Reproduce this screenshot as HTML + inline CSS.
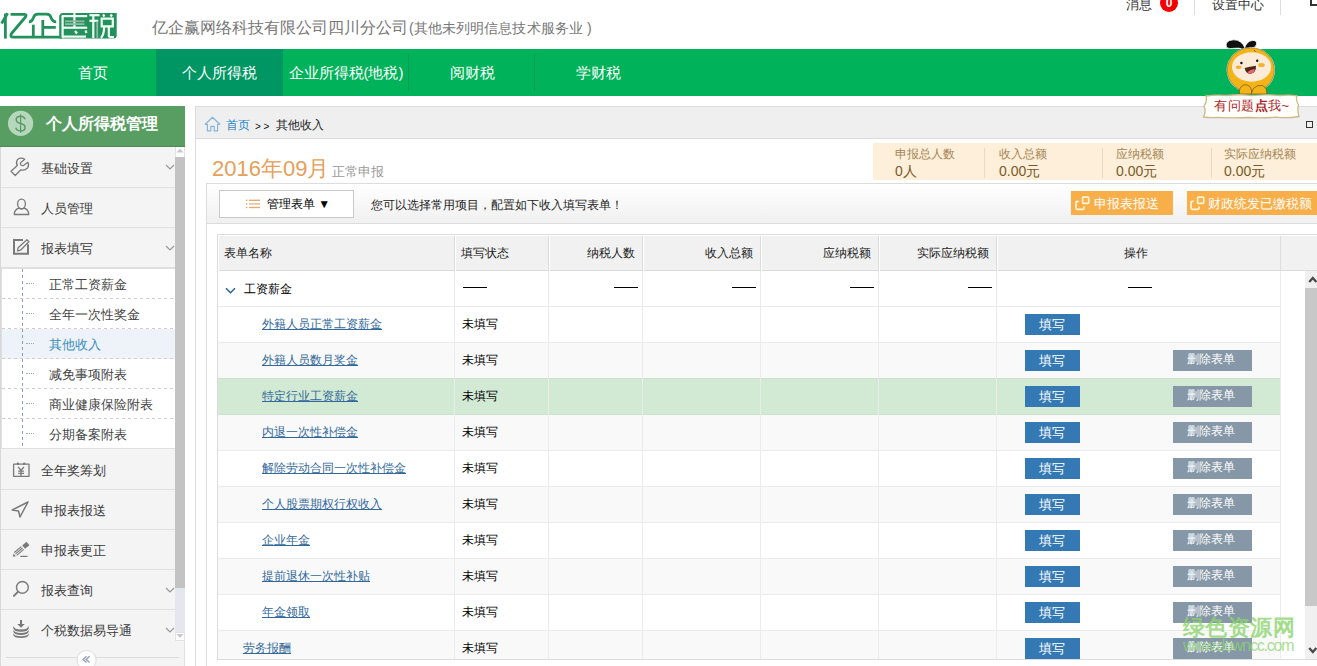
<!DOCTYPE html>
<html><head><meta charset="utf-8">
<style>
*{box-sizing:border-box;margin:0;padding:0}
html,body{width:1317px;height:666px;overflow:hidden;background:#fff;font-family:"Liberation Sans",sans-serif;color:#333;position:relative}
.a{position:absolute;white-space:nowrap}
/* header */
#comp{left:152px;top:17px;font-size:16px;line-height:22px;color:#777}
#comp span{font-size:14px;padding-left:1px;letter-spacing:0.1px}
/* nav */
#nav{left:0;top:49px;width:1317px;height:47px;background:#00b259}
#nav .it{position:absolute;top:0;height:47px;line-height:47px;color:#fff;font-size:15px;text-align:center;width:126px}
#nav .act{background:#009664}
#nav .sep{position:absolute;top:5px;width:1px;height:37px;background:#0b9a54}
/* sidebar */
#sb{left:0;top:106px;width:185px;height:560px;background:#f4f4f4;border-left:1px solid #d8d8d8;border-right:1px solid #e0e0e0}
#sbh{left:0;top:106px;width:185px;height:41px;background:#589e62;border-bottom:1px solid #4d8a57;color:#fff;font-size:16px;font-weight:bold;line-height:36px}
.mi{position:absolute;left:1px;width:174px;height:40px;border-bottom:1px solid #e0e0e0;font-size:13px;color:#3a3a3a;line-height:40px}
.mi .tx{position:absolute;left:40px;top:0}
.mi .chev{position:absolute;left:164px;top:17px}
.mi svg.ic{position:absolute}
.si{position:absolute;left:2px;width:173px;height:30px;background:#fff;font-size:13px;color:#444;line-height:30px}
.si::after{content:"";position:absolute;left:0;bottom:0;width:173px;height:1px;background:repeating-linear-gradient(to right,#cfcfcf 0 3px,transparent 3px 6px)}
.si.last::after{display:none}
.si .tx{position:absolute;left:47px;top:0}
.si .dt{position:absolute;left:24px;top:14px;width:8px;border-top:1px dotted #9aa8b8}
/* content */
#cp{left:195px;top:106px;width:1122px;height:560px;border-left:1px solid #dcdcdc;border-top:1px solid #dcdcdc}
#bc{left:196px;top:107px;width:1121px;height:32px;background:#efefef;border-bottom:1px solid #dcdcdc}
.tb{position:absolute}
table{border-collapse:collapse}
.th{top:245px;font-size:12px;line-height:17px;color:#222}
.td{font-size:12px;line-height:17px}
.lk{color:#33699a;text-decoration:underline}
.btn{height:21px;color:#fff;font-size:12px;line-height:21px;text-align:center}

.sl{top:146px;font-size:12px;line-height:16px;color:#a58556}
.sv{top:162px;font-size:14px;line-height:18px;color:#7b5a2a}
.ob{top:191px;height:24px;background:#f8af4a;color:#fff;font-size:13px;line-height:24px}

</style></head><body>

<!-- logo -->
<svg class="a" style="left:0;top:0" width="120" height="45" viewBox="0 0 120 45">
  <g fill="none" stroke="#23915b" stroke-width="2.8" stroke-linejoin="round">
    <path d="M7.6 13.3 L1.6 23.5"/>
    <path d="M5.4 13.5 V38.6"/>
    <path d="M10.6 14.4 H24.5 Q27 14.4 25.5 17 L11.5 33.5 Q9.5 37.2 13.5 37.2 H62"/>
    <path d="M28.9 21.9 Q32 21.9 33.5 17.5 Q34.5 14.1 38 14.1 H46.5 Q50 14.1 51 17.5 Q52.5 21.9 56.2 21.9"/>
    <path d="M33.3 24.7 V37"/>
    <path d="M42.8 20 V37"/>
    <path d="M42.8 27.4 H55.8"/>
  </g>
  <path d="M59.2 38.6 V17 Q59.2 13 63.2 13 H116.7 V35.6 Q116.7 38.6 113.7 38.6 Z" fill="#23915b"/>
  <g fill="none" stroke="#f2fff6" stroke-width="2.2">
    <path d="M61.7 16.1 H87.2"/>
    <path d="M62.6 16 V37.6"/>
    <path d="M62 27.7 H87.2"/>
    <path d="M74.4 13 V27.7"/>
    
    <path d="M62 36.6 H86"/>
    <path d="M75 31 L77 33.5"/>
    <path d="M85.5 30.5 L86.5 33"/>
    <path d="M89.4 15.2 H99.6"/>
    <path d="M89.4 20.8 H98.2"/>
    <path d="M93.3 15 V38.2"/>
    <path d="M103 14.5 L104.5 16.5"/>
    <path d="M112 14.5 L110.5 16.5"/>
    <path d="M101.7 18.6 H112.8 V26.3 H101.7 Z"/>
    <path d="M104.2 26.3 Q104.2 34.5 101 38"/>
    <path d="M108.8 26.3 V35.5 Q108.8 37.2 111 37.2 H114"/>
  </g>
  <g fill="none" stroke="#8fb9a2" stroke-width="1.8">
    <path d="M65 21.3 H84.5"/>
    <path d="M65 24.1 H84.5"/>
    <path d="M97.2 21.5 V38.2"/>
  </g>
</svg>
<div id="comp" class="a">亿企赢网络科技有限公司四川分公司<span>(其他未列明信息技术服务业 )</span></div>

<!-- top right -->
<div class="a" style="left:1126px;top:-4px;font-size:13px;line-height:18px;color:#333">消息</div>
<div class="a" style="left:1160px;top:-6px;width:18px;height:18px;border-radius:50%;background:#f50000;color:#fff;font-size:12px;font-weight:bold;line-height:18px;text-align:center">0</div>
<div class="a" style="left:1194px;top:0;width:1px;height:15px;background:#ddd"></div>
<div class="a" style="left:1212px;top:-4px;font-size:13px;line-height:18px;color:#333">设置中心</div>
<div class="a" style="left:1280px;top:0;width:1px;height:15px;background:#ddd"></div>
<div class="a" style="left:1310px;top:-4px;width:10px;height:10px;border:2px solid #333"></div>

<!-- nav -->
<div id="nav" class="a">
  <div class="it" style="left:30px">首页</div>
  <div class="it act" style="left:156px;width:127px">个人所得税</div>
  <div class="it" style="left:283px">企业所得税(地税)</div>
  <div class="sep" style="left:408px"></div>
  <div class="it" style="left:409px">阅财税</div>
  <div class="sep" style="left:534px"></div>
  <div class="it" style="left:535px">学财税</div>
</div>



<!-- sidebar -->
<div id="sb" class="a"></div>
<div id="sbh" class="a">
  <svg class="a" style="left:0;top:0" width="40" height="41" viewBox="0 106 40 41"><circle cx="20.6" cy="123.4" r="12.6" fill="#b6d7bb"/><path d="M25 119.4 Q24.2 116.3 20.5 116.3 Q16.2 116.3 16.2 119.8 Q16.2 122.6 20.6 123.4 Q25.1 124.3 25.1 127.4 Q25.1 130.9 20.5 130.9 Q16.5 130.9 15.8 127.7" fill="none" stroke="#5a9a64" stroke-width="1.5"/><path d="M20.6 114.2 V132.8" stroke="#5a9a64" stroke-width="1.2"/></svg>
  <div class="a" style="left:46px;top:0;line-height:36px">个人所得税管理</div>
</div>

<div class="mi" style="top:147px;height:41px"><span class="tx" style="top:2px">基础设置</span><svg class="chev" width="10" height="7" viewBox="0 0 10 7"><path d="M1 1 L5 5 L9 1" fill="none" stroke="#999" stroke-width="1.2"/></svg></div>
<div class="mi" style="top:188px;height:40px"><span class="tx" style="top:1px">人员管理</span></div>
<div class="mi" style="top:228px;height:40px"><span class="tx" style="top:1px">报表填写</span><svg class="chev" width="10" height="7" viewBox="0 0 10 7"><path d="M1 1 L5 5 L9 1" fill="none" stroke="#999" stroke-width="1.2"/></svg></div>
<div class="si" style="top:269px"><span class="dt"></span><span class="tx" style="top:1px">正常工资薪金</span></div>
<div class="si" style="top:299px"><span class="dt"></span><span class="tx" style="top:1px">全年一次性奖金</span></div>
<div class="si" style="top:329px;background:#edf3f8;color:#3d8cc0"><span class="dt"></span><span class="tx" style="top:1px">其他收入</span></div>
<div class="si" style="top:359px"><span class="dt"></span><span class="tx" style="top:1px">减免事项附表</span></div>
<div class="si" style="top:389px"><span class="dt"></span><span class="tx" style="top:1px">商业健康保险附表</span></div>
<div class="si last" style="border-bottom:1px solid #e0e0e0;top:419px"><span class="dt"></span><span class="tx" style="top:1px">分期备案附表</span></div>
<div class="a" style="left:1px;top:268px;width:174px;height:1px;background:#e0e0e0"></div><div class="a" style="left:1px;top:268px;width:1px;height:181px;background:#dedede"></div>
<div class="a" style="left:22px;top:269px;width:1px;height:177px;background:repeating-linear-gradient(to bottom,#8b9db2 0 3px,transparent 3px 6px)"></div>

<div class="mi" style="top:449px;height:41px"><span class="tx" style="top:2px">全年奖筹划</span></div>
<div class="mi" style="top:490px;height:40px"><span class="tx" style="top:1px">申报表报送</span></div>
<div class="mi" style="top:530px;height:40px"><span class="tx" style="top:1px">申报表更正</span></div>
<div class="mi" style="top:570px;height:40px"><span class="tx" style="top:1px">报表查询</span><svg class="chev" width="10" height="7" viewBox="0 0 10 7"><path d="M1 1 L5 5 L9 1" fill="none" stroke="#999" stroke-width="1.2"/></svg></div>
<div class="mi" style="top:610px;height:56px;border-bottom:none"><span class="tx" style="top:1px">个税数据易导通</span><svg class="chev" width="10" height="7" viewBox="0 0 10 7"><path d="M1 1 L5 5 L9 1" fill="none" stroke="#999" stroke-width="1.2"/></svg></div>
<svg class="a" style="left:0;top:0" width="40" height="666" viewBox="0 0 40 666">
<g fill="none" stroke="#7a7a7a" stroke-width="1.3" stroke-linejoin="round">
<path d="M24.8 159.3 Q21 157 17.5 159.5 Q15.5 162.5 17.3 165.6 L11 171.3 L15.2 175.5 L20.9 169.8 Q24.5 171 27.5 168 Q29.5 165 27.8 162.3 L23.5 165.5 Q21.8 166 20.8 164.8 Q20 163.5 20.8 162.5 Z"/>
<ellipse cx="21.5" cy="203.9" rx="3.9" ry="4.8"/>
<path d="M14.3 214.5 H28.7 Q28.7 209.8 24.3 208.2 L21.5 209 L18.7 208.2 Q14.3 209.8 14.3 214.5 Z" stroke-width="1.4"/>
<path d="M23 240 H14 V253.7 H28 V244.2" stroke-width="2" stroke-linejoin="miter"/>
<path d="M26.9 239.8 L28.9 241.8 L20.5 250.2 L17.5 250.8 L18.1 247.8 Z"/>
<path d="M13.6 464.2 H29 V476.3 H13.6 Z"/>
<path d="M18.2 467 L21 470.3 L23.9 467 M21 470.3 V476 M18.2 471.2 H24 M18.2 473.4 H24"/>
<path d="M28 502 L12.2 510 L18.5 511 L20 517 Z" stroke-width="1.5"/>
<circle cx="22.4" cy="587.4" r="5.9" stroke-width="1.4"/>
<path d="M17.9 591.9 L13.9 595.9" stroke-width="2" stroke-linecap="round"/>
<path d="M20.3 556.4 H27.5" stroke-width="1.2"/>
</g>
<g fill="#7a7a7a">
<circle cx="17.9" cy="463.8" r="1.3"/><circle cx="24.2" cy="463.8" r="1.3"/>
<path d="M29.4 545.2 L26.5 541.8 L22.2 545.5 L25.1 548.8 Z"/>
<path d="M13.6 553.6 L15.9 556.2 L12.8 556.8 Z"/>
</g>
<g stroke="#7a7a7a" stroke-width="1.1">
<path d="M14.3 552.5 L21.3 546.6 M15.5 553.9 L22.5 548 M16.7 555.3 L23.7 549.4"/>
</g>
<g fill="#7a7a7a">
<path d="M20 620 H22 V624 H24.8 L21 627.8 L17.2 624 H20 Z"/>
<path d="M13.9 626 Q13.9 629.6 21 629.6 Q28.1 629.6 28.1 626 Q28.9 626.8 28.7 628.2 Q28 631.8 21 631.8 Q14 631.8 13.3 628.2 Q13.1 626.8 13.9 626 Z"/>
<path d="M13.3 629.8 Q14 632.9 21 632.9 Q28 632.9 28.7 629.8 V631.6 Q28 635 21 635 Q14 635 13.3 631.6 Z"/>
<path d="M13.3 633.2 Q14 636.2 21 636.2 Q28 636.2 28.7 633.2 V634.8 Q28 638 21 638 Q14 638 13.3 634.8 Z"/>
</g>
</svg>
<!-- sidebar scrollbar -->
<div class="a" style="left:175px;top:147px;width:10px;height:494px;background:#e4e8ee"></div>
<div class="a" style="left:175px;top:147px;width:10px;height:10px;background:#fff;border-left:1px solid #e2e2e2;border-right:1px solid #e2e2e2"><svg width="8" height="10" viewBox="0 0 8 10" style="display:block"><path d="M0.3 5.6 L4 1.8 L7.7 5.6 Z" fill="#c8c8c8"/></svg></div>
<div class="a" style="left:175px;top:157px;width:10px;height:431px;background:#c3c3c3"></div>
<div class="a" style="left:175px;top:632px;width:10px;height:9px;background:#fff;border:1px solid #e2e2e2"><svg width="8" height="7" viewBox="0 0 8 7" style="display:block"><path d="M0.5 1 L4 5 L7.5 1 Z" fill="#c8c8c8"/></svg></div>
<!-- collapse -->
<div class="a" style="left:6px;top:657px;width:173px;height:1px;background:#ddd"></div>
<svg class="a" style="left:70px;top:645px" width="34" height="21" viewBox="70 645 34 21"><circle cx="86.6" cy="660" r="9.6" fill="#fff" stroke="#dedede" stroke-width="1"/><path d="M86.5 656.2 L83 659.4 L86.5 662.6 M89.6 656.2 L86.1 659.4 L89.6 662.6" fill="none" stroke="#9aa1b6" stroke-width="1.4"/></svg>


<!-- content -->
<div id="cp" class="a"></div>

<div id="bc" class="a"></div>
<svg class="a" style="left:200px;top:112px" width="25" height="24" viewBox="200 112 25 24"><path d="M205.3 124.3 L212.5 117.2 L219.7 124.3 H217.6 V130.8 H214.2 V126.4 H210.8 V130.8 H207.4 V124.3 Z" fill="none" stroke="#86b6dc" stroke-width="1.2" stroke-linejoin="round"/></svg>
<div class="a" style="left:226px;top:117px;font-size:12px;line-height:17px;color:#1f86c8">首页</div>
<div class="a" style="left:255px;top:118px;font-size:10px;line-height:17px;color:#111">&gt; &gt;</div>
<div class="a" style="left:276px;top:117px;font-size:12px;line-height:17px;color:#222">其他收入</div>
<div class="a" style="left:1306px;top:121px;width:7px;height:7px;border:1.5px solid #333"></div>

<div class="a" style="left:212px;top:155px;font-size:22px;line-height:28px;color:#e5a05a">2016年09月</div>
<div class="a" style="left:332px;top:162px;font-size:13px;line-height:20px;color:#999">正常申报</div>

<!-- summary -->
<div class="a" style="left:873px;top:143px;width:444px;height:37px;background:#fdefd9"></div>
<div class="a" style="left:984px;top:148px;width:1px;height:30px;background:#ead9c0"></div>
<div class="a" style="left:1102px;top:148px;width:1px;height:30px;background:#ead9c0"></div>
<div class="a" style="left:1211px;top:148px;width:1px;height:30px;background:#ead9c0"></div>
<div class="a sl" style="left:895px">申报总人数</div><div class="a sv" style="left:895px">0人</div>
<div class="a sl" style="left:999px">收入总额</div><div class="a sv" style="left:999px">0.00元</div>
<div class="a sl" style="left:1116px">应纳税额</div><div class="a sv" style="left:1116px">0.00元</div>
<div class="a sl" style="left:1224px">实际应纳税额</div><div class="a sv" style="left:1224px">0.00元</div>

<!-- inner container -->
<div class="a" style="left:206px;top:183px;width:1111px;height:483px;border-left:1px solid #dcdcdc"></div>
<div class="a" style="left:206px;top:183px;width:1111px;height:41px;border-top:1px solid #dcdcdc;border-bottom:1px solid #dcdcdc;border-left:1px solid #dcdcdc;background:linear-gradient(#fff,#f0f0f0)"></div>
<div class="a" style="left:219px;top:190px;width:135px;height:28px;background:#fff;border:1px solid #c8c8c8"></div>
<svg class="a" style="left:245px;top:199px" width="16" height="10" viewBox="0 0 16 10"><g fill="#e4ad70"><rect x="0.8" y="0.6" width="1.6" height="1.4"/><rect x="0.8" y="4.2" width="1.6" height="1.4"/><rect x="0.8" y="7.8" width="1.6" height="1.4"/><rect x="4" y="0.6" width="11" height="1.4"/><rect x="4" y="4.2" width="11" height="1.4" fill="#d9bb98"/><rect x="4" y="7.8" width="11" height="1.4"/></g></svg>
<div class="a" style="left:267px;top:196px;font-size:12px;line-height:17px;color:#000;font-weight:500">管理表单 &#9660;</div>
<div class="a" style="left:371px;top:197px;font-size:12px;line-height:17px;color:#222">您可以选择常用项目，配置如下收入填写表单！</div>
<div class="a ob" style="left:1071px;width:102px"><svg width="22" height="24" viewBox="0 0 22 24" style="position:absolute;left:0;top:0"><g fill="none" stroke="#fff6d6" stroke-width="1.7"><rect x="11.6" y="6.2" width="6.1" height="6.1" rx="0.8"/><path d="M7.8 10.3 H6.2 Q5 10.3 5 11.5 V17.1 Q5 18.3 6.2 18.3 H11.8 Q13 18.3 13 17.1 V15.4"/></g></svg><span style="position:absolute;left:23px;top:1px">申报表报送</span></div>
<div class="a ob" style="left:1187px;width:130px"><svg width="22" height="24" viewBox="0 0 22 24" style="position:absolute;left:-1px;top:0"><g fill="none" stroke="#fff6d6" stroke-width="1.7"><rect x="11.6" y="6.2" width="6.1" height="6.1" rx="0.8"/><path d="M7.8 10.3 H6.2 Q5 10.3 5 11.5 V17.1 Q5 18.3 6.2 18.3 H11.8 Q13 18.3 13 17.1 V15.4"/></g></svg><span style="position:absolute;left:21px;top:1px">财政统发已缴税额</span></div>

<!-- TABLE START -->
<div class="a" style="left:217px;top:234px;width:1100px;height:37px;border-top:1px solid #dcdcdc;border-left:1px solid #dcdcdc;background:#fff"></div>
<div class="a" style="left:219px;top:236px;width:236px;height:35px;background:#f1f1f1;border-right:1px solid #dcdcdc;border-bottom:1px solid #dcdcdc"></div>
<div class="a" style="left:456px;top:236px;width:93px;height:35px;background:#f1f1f1;border-right:1px solid #dcdcdc;border-bottom:1px solid #dcdcdc"></div>
<div class="a" style="left:550px;top:236px;width:93px;height:35px;background:#f1f1f1;border-right:1px solid #dcdcdc;border-bottom:1px solid #dcdcdc"></div>
<div class="a" style="left:644px;top:236px;width:117px;height:35px;background:#f1f1f1;border-right:1px solid #dcdcdc;border-bottom:1px solid #dcdcdc"></div>
<div class="a" style="left:762px;top:236px;width:117px;height:35px;background:#f1f1f1;border-right:1px solid #dcdcdc;border-bottom:1px solid #dcdcdc"></div>
<div class="a" style="left:880px;top:236px;width:117px;height:35px;background:#f1f1f1;border-right:1px solid #dcdcdc;border-bottom:1px solid #dcdcdc"></div>
<div class="a" style="left:998px;top:236px;width:283px;height:35px;background:#f1f1f1;border-right:1px solid #dcdcdc;border-bottom:1px solid #dcdcdc"></div>
<div class="a" style="left:1281px;top:236px;width:36px;height:35px;background:#f1f1f1;border-bottom:1px solid #dcdcdc"></div>
<div class="a th" style="left:224px">表单名称</div>
<div class="a th" style="left:461px">填写状态</div>
<div class="a th" style="left:587px">纳税人数</div>
<div class="a th" style="left:705px">收入总额</div>
<div class="a th" style="left:823px">应纳税额</div>
<div class="a th" style="left:917px">实际应纳税额</div>
<div class="a th" style="left:1124px">操作</div>
<div class="a" style="left:217px;top:271px;width:1064px;height:388px;border-left:1px solid #dcdcdc;overflow:hidden">
<div class="a" style="left:0;top:0px;width:1063px;height:36px;background:#fff;border-bottom:1px solid #ebebeb"></div>
<svg class="a" style="left:7px;top:16px" width="11" height="8" viewBox="0 0 11 8"><path d="M1 1.2 L5.5 5.8 L10 1.2" fill="none" stroke="#2d6394" stroke-width="1.5"/></svg>
<div class="a td" style="left:26px;top:10px;color:#000">工资薪金</div>
<div class="a" style="left:245px;top:16px;width:24px;height:1px;background:#000"></div>
<div class="a" style="left:396px;top:16px;width:24px;height:1px;background:#000"></div>
<div class="a" style="left:514px;top:16px;width:24px;height:1px;background:#000"></div>
<div class="a" style="left:632px;top:16px;width:24px;height:1px;background:#000"></div>
<div class="a" style="left:750px;top:16px;width:24px;height:1px;background:#000"></div>
<div class="a" style="left:910px;top:16px;width:24px;height:1px;background:#000"></div>
<div class="a" style="left:0;top:36px;width:1063px;height:36px;background:#fff;border-bottom:1px solid #ebebeb"></div>
<div class="a td lk" style="left:44px;top:45px">外籍人员正常工资薪金</div>
<div class="a td" style="left:244px;top:45px;color:#000">未填写</div>
<div class="a btn" style="left:807px;top:43px;width:55px;background:#3579b4;font-size:13px;padding-right:2px">填写</div>
<div class="a" style="left:0;top:72px;width:1063px;height:36px;background:#f9f9f9;border-bottom:1px solid #ebebeb"></div>
<div class="a td lk" style="left:44px;top:81px">外籍人员数月奖金</div>
<div class="a td" style="left:244px;top:81px;color:#000">未填写</div>
<div class="a btn" style="left:807px;top:79px;width:55px;background:#3579b4;font-size:13px;padding-right:2px">填写</div>
<div class="a btn" style="left:955px;top:79px;width:79px;background:#8698a8;padding-right:3px;line-height:19px">删除表单</div>
<div class="a" style="left:0;top:107px;width:1063px;height:37px;background:#d2e9d4;border-top:1px solid #cfdfcf;border-bottom:1px solid #cfdfcf"></div>
<div class="a td lk" style="left:44px;top:117px">特定行业工资薪金</div>
<div class="a td" style="left:244px;top:117px;color:#000">未填写</div>
<div class="a btn" style="left:807px;top:115px;width:55px;background:#3579b4;font-size:13px;padding-right:2px">填写</div>
<div class="a btn" style="left:955px;top:115px;width:79px;background:#8698a8;padding-right:3px;line-height:19px">删除表单</div>
<div class="a" style="left:0;top:144px;width:1063px;height:36px;background:#f9f9f9;border-bottom:1px solid #ebebeb"></div>
<div class="a td lk" style="left:44px;top:153px">内退一次性补偿金</div>
<div class="a td" style="left:244px;top:153px;color:#000">未填写</div>
<div class="a btn" style="left:807px;top:151px;width:55px;background:#3579b4;font-size:13px;padding-right:2px">填写</div>
<div class="a btn" style="left:955px;top:151px;width:79px;background:#8698a8;padding-right:3px;line-height:19px">删除表单</div>
<div class="a" style="left:0;top:180px;width:1063px;height:36px;background:#fff;border-bottom:1px solid #ebebeb"></div>
<div class="a td lk" style="left:44px;top:189px">解除劳动合同一次性补偿金</div>
<div class="a td" style="left:244px;top:189px;color:#000">未填写</div>
<div class="a btn" style="left:807px;top:187px;width:55px;background:#3579b4;font-size:13px;padding-right:2px">填写</div>
<div class="a btn" style="left:955px;top:187px;width:79px;background:#8698a8;padding-right:3px;line-height:19px">删除表单</div>
<div class="a" style="left:0;top:216px;width:1063px;height:36px;background:#f9f9f9;border-bottom:1px solid #ebebeb"></div>
<div class="a td lk" style="left:44px;top:225px">个人股票期权行权收入</div>
<div class="a td" style="left:244px;top:225px;color:#000">未填写</div>
<div class="a btn" style="left:807px;top:223px;width:55px;background:#3579b4;font-size:13px;padding-right:2px">填写</div>
<div class="a btn" style="left:955px;top:223px;width:79px;background:#8698a8;padding-right:3px;line-height:19px">删除表单</div>
<div class="a" style="left:0;top:252px;width:1063px;height:36px;background:#fff;border-bottom:1px solid #ebebeb"></div>
<div class="a td lk" style="left:44px;top:261px">企业年金</div>
<div class="a td" style="left:244px;top:261px;color:#000">未填写</div>
<div class="a btn" style="left:807px;top:259px;width:55px;background:#3579b4;font-size:13px;padding-right:2px">填写</div>
<div class="a btn" style="left:955px;top:259px;width:79px;background:#8698a8;padding-right:3px;line-height:19px">删除表单</div>
<div class="a" style="left:0;top:288px;width:1063px;height:36px;background:#f9f9f9;border-bottom:1px solid #ebebeb"></div>
<div class="a td lk" style="left:44px;top:297px">提前退休一次性补贴</div>
<div class="a td" style="left:244px;top:297px;color:#000">未填写</div>
<div class="a btn" style="left:807px;top:295px;width:55px;background:#3579b4;font-size:13px;padding-right:2px">填写</div>
<div class="a btn" style="left:955px;top:295px;width:79px;background:#8698a8;padding-right:3px;line-height:19px">删除表单</div>
<div class="a" style="left:0;top:324px;width:1063px;height:36px;background:#fff;border-bottom:1px solid #ebebeb"></div>
<div class="a td lk" style="left:44px;top:333px">年金领取</div>
<div class="a td" style="left:244px;top:333px;color:#000">未填写</div>
<div class="a btn" style="left:807px;top:331px;width:55px;background:#3579b4;font-size:13px;padding-right:2px">填写</div>
<div class="a btn" style="left:955px;top:331px;width:79px;background:#8698a8;padding-right:3px;line-height:19px">删除表单</div>
<div class="a" style="left:0;top:360px;width:1063px;height:36px;background:#f9f9f9;border-bottom:1px solid #ebebeb"></div>
<div class="a td lk" style="left:25px;top:369px">劳务报酬</div>
<div class="a td" style="left:244px;top:369px;color:#000">未填写</div>
<div class="a btn" style="left:807px;top:367px;width:55px;background:#3579b4;font-size:13px;padding-right:2px">填写</div>
<div class="a btn" style="left:955px;top:367px;width:79px;background:#8698a8;padding-right:3px;line-height:19px">删除表单</div>
<div class="a" style="left:236px;top:0;width:1px;height:400px;background:#ebebeb"></div>
<div class="a" style="left:330px;top:0;width:1px;height:400px;background:#ebebeb"></div>
<div class="a" style="left:424px;top:0;width:1px;height:400px;background:#ebebeb"></div>
<div class="a" style="left:542px;top:0;width:1px;height:400px;background:#ebebeb"></div>
<div class="a" style="left:660px;top:0;width:1px;height:400px;background:#ebebeb"></div>
<div class="a" style="left:778px;top:0;width:1px;height:400px;background:#ebebeb"></div>
<div class="a" style="left:1062px;top:0;width:1px;height:400px;background:#ebebeb"></div>
</div>
<div class="a" style="left:217px;top:659px;width:1100px;height:1px;background:#dcdcdc"></div>
<div class="a" style="left:1305px;top:271px;width:12px;height:388px;background:#f0f0f0"></div>
<div class="a" style="left:1305px;top:288px;width:12px;height:318px;background:#c8c8c8"></div>
<svg class="a" style="left:1308px;top:275px" width="10" height="9" viewBox="0 0 10 9"><path d="M1.2 7 L4.8 3 L8.4 7" fill="none" stroke="#4a4a4a" stroke-width="2.3"/></svg>
<svg class="a" style="left:1308px;top:646px" width="10" height="9" viewBox="0 0 10 9"><path d="M1.2 2 L4.8 6 L8.4 2" fill="none" stroke="#4a4a4a" stroke-width="2.3"/></svg>
<div class="a" style="left:1183px;top:613px;font-size:22px;line-height:30px;font-weight:bold;letter-spacing:0.4px;color:rgba(140,212,110,0.8)">绿色资源网</div>
<div class="a" style="left:1183px;top:637px;font-size:16px;line-height:18px;letter-spacing:-1.2px;color:rgba(140,212,110,0.75)">www.downcc.com</div>
<!-- TABLE END -->

<!-- mascot -->
<svg class="a" style="left:1195px;top:35px" width="110" height="90" viewBox="1195 35 110 90">
  <path d="M1226.4 47.4 Q1224.4 40.4 1233.5 39.8 Q1241.8 39.6 1245.2 48.6 L1242.2 49.2 Q1239.5 47.6 1234.5 48.3 Q1229 49.4 1226.4 47.4 Z" fill="#111" stroke="#fff" stroke-width="0.8"/>
  <path d="M1244.4 49 Q1246.2 41 1252.6 40.4 Q1257.6 40.4 1256.4 44.8 Q1255.2 48.4 1250.2 48 Q1248.2 48 1247.4 49.6 Z" fill="#111" stroke="#fff" stroke-width="0.8"/>
  <ellipse cx="1250.8" cy="70" rx="24.2" ry="22.8" fill="#fff"/>
  <ellipse cx="1250.8" cy="70" rx="23.6" ry="22.2" fill="#f3b41a" stroke="#6a5020" stroke-width="0.5"/>
  <path d="M1254 50.2 L1255.6 51.6" stroke="#5a4010" stroke-width="0.8"/>
  <ellipse cx="1251.6" cy="67" rx="19.6" ry="14.7" fill="#fbebd7"/>
  <ellipse cx="1238.6" cy="67.2" rx="2.9" ry="1.7" fill="#f4b12e"/>
  <ellipse cx="1261.4" cy="64.9" rx="3.3" ry="2" fill="#f4b12e"/>
  <circle cx="1241.4" cy="63" r="1.2" fill="#111"/>
  <circle cx="1257.2" cy="60.7" r="1.2" fill="#111"/>
  <path d="M1244.6 68.1 Q1250 66.5 1255.9 65.7 Q1256.5 72 1251 73.8 Q1246 74.5 1244.6 68.1 Z" fill="#4b2818"/>
  <path d="M1247.5 72.2 Q1250.5 69 1255.2 69.2 Q1253.8 73.2 1250.6 73.7 Q1248.4 73.8 1247.5 72.2 Z" fill="#ee6475"/>
  <g fill="#f3b41a" stroke="#5a4414" stroke-width="0.6">
    <path d="M1239.4 94 Q1238.6 87.4 1243.6 85 Q1248.8 83.8 1251 88.6 L1252 94 Z"/>
    <path d="M1266.8 94 Q1267.4 88 1262.8 85.6 Q1257.2 84.4 1253.4 88.4 L1251.2 94 Z"/>
  </g>
  <path d="M1206 96 Q1216 94.5 1226 95.5 Q1240 94 1252 95.5 Q1266 94.2 1280 95.5 Q1290 94.5 1297 95.8 Q1295.5 100 1298.5 105 Q1297 110 1299 116.5 Q1288 118.5 1276 117.2 Q1262 118.5 1248 117.5 Q1232 118.5 1218 117.3 Q1210 118 1203.5 117 Q1206.5 111 1204 106.5 Q1207.5 101 1206 96 Z" fill="#fffefa" stroke="#cdb88a" stroke-width="1.3"/>
  <text x="1214" y="110" font-size="13" fill="#ae1f2a" letter-spacing="0.5" font-family="Liberation Sans, sans-serif">有问题<tspan font-weight="bold">点</tspan>我~</text>
</svg>
</body></html>
